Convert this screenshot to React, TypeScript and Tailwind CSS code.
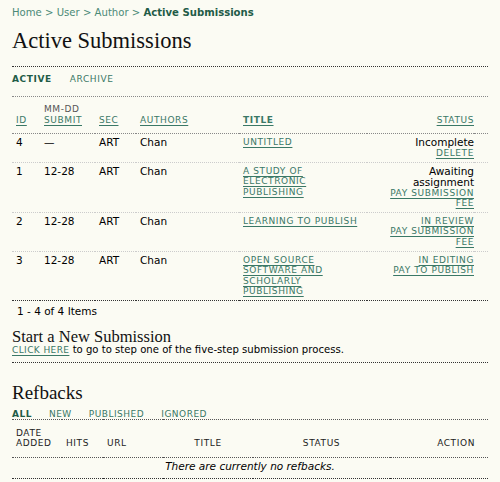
import React from "react";

const linkCls =
  "text-[#3a7866] underline underline-offset-2 uppercase text-[9px] tracking-[0.6px]";

type Line = { text: string; link?: boolean };
type Row = {
  id: string;
  date: string;
  sec: string;
  author: string;
  title: string[];
  status: Line[];
};

const rows: Row[] = [
  {
    id: "4",
    date: "—",
    sec: "ART",
    author: "Chan",
    title: ["UNTITLED"],
    status: [{ text: "Incomplete" }, { text: "DELETE", link: true }],
  },
  {
    id: "1",
    date: "12-28",
    sec: "ART",
    author: "Chan",
    title: ["A STUDY OF", "ELECTRONIC", "PUBLISHING"],
    status: [
      { text: "Awaiting" },
      { text: "assignment" },
      { text: "PAY SUBMISSION", link: true },
      { text: "FEE", link: true },
    ],
  },
  {
    id: "2",
    date: "12-28",
    sec: "ART",
    author: "Chan",
    title: ["LEARNING TO PUBLISH"],
    status: [
      { text: "IN REVIEW", link: true },
      { text: "PAY SUBMISSION", link: true },
      { text: "FEE", link: true },
    ],
  },
  {
    id: "3",
    date: "12-28",
    sec: "ART",
    author: "Chan",
    title: ["OPEN SOURCE", "SOFTWARE AND", "SCHOLARLY", "PUBLISHING"],
    status: [
      { text: "IN EDITING", link: true },
      { text: "PAY TO PUBLISH", link: true },
    ],
  },
];

const Dots = ({ className = "" }: { className?: string }) => (
  <div className={"border-t border-dotted " + className} />
);

const HeadLink = ({ children, bold }: { children: React.ReactNode; bold?: boolean }) => (
  <a className={"block leading-[11px] " + linkCls + (bold ? " font-bold" : "")}>{children}</a>
);

export default function App() {
  return (
    <div className="min-h-screen bg-[#fbfbf3] px-3 pt-[6px] font-['DejaVu_Sans',Verdana,sans-serif] text-[10.5px] text-black">
      {/* breadcrumb */}
      <div className="text-[10.1px] leading-[14px] text-[#4b8a77]">
        <a>Home</a> &gt; <a>User</a> &gt; <a>Author</a> &gt;{" "}
        <a className="font-bold text-[#1f5c47]">Active Submissions</a>
      </div>

      <h2 className="mt-[7px] font-['Liberation_Serif',Georgia,serif] text-[22.5px] leading-[28px] text-[#111]">
        Active Submissions
      </h2>

      <Dots className="mt-[11px] border-[#333]" />

      {/* tabs */}
      <div className="mt-[6px] flex gap-[18px] text-[9px] leading-[12px] uppercase tracking-[0.6px]">
        <span className="font-bold text-[#1f5c47]">Active</span>
        <span className="text-[#3a7866]">Archive</span>
      </div>

      <Dots className="mt-[11px] border-[#888]" />

      {/* submissions table */}
      <table className="w-[476px] border-collapse table-fixed">
        <colgroup>
          <col className="w-[28px]" />
          <col className="w-[55px]" />
          <col className="w-[41px]" />
          <col className="w-[103px]" />
          <col className="w-[128px]" />
          <col className="w-[107px]" />
          <col className="w-[14px]" />
        </colgroup>
        <thead>
          <tr className="border-b border-dotted border-[#888] align-bottom text-left">
            <th className="pl-1 pt-[7px] pb-[7px] font-normal">
              <HeadLink>ID</HeadLink>
            </th>
            <th className="pl-1 pt-[7px] pb-[7px] font-normal">
              <div className="text-[9px] leading-[11px] tracking-[0.6px] text-[#555]">MM-DD</div>
              <HeadLink>Submit</HeadLink>
            </th>
            <th className="pl-1 pt-[7px] pb-[7px] font-normal">
              <HeadLink>Sec</HeadLink>
            </th>
            <th className="pl-1 pt-[7px] pb-[7px] font-normal">
              <HeadLink>Authors</HeadLink>
            </th>
            <th className="pl-1 pt-[7px] pb-[7px] font-normal">
              <HeadLink bold>Title</HeadLink>
            </th>
            <th className="pt-[7px] pb-[7px] text-right font-normal">
              <HeadLink>Status</HeadLink>
            </th>
            <th />
          </tr>
        </thead>
        <tbody>
          {rows.map((r, i) => (
            <tr
              key={r.id}
              className={
                "align-top " +
                (i < rows.length - 1
                  ? "border-b border-dotted border-[#ccc]"
                  : "border-b border-dotted border-[#333]")
              }
            >
              <td className="pl-1 pt-[3px] pb-[3px] leading-[11px]">{r.id}</td>
              <td className="pl-1 pt-[3px] pb-[3px] leading-[11px]">{r.date}</td>
              <td className="pl-1 pt-[3px] pb-[3px] leading-[11px]">{r.sec}</td>
              <td className="pl-1 pt-[3px] pb-[3px] leading-[11px]">{r.author}</td>
              <td className="pl-1 pt-[3px] pb-[3px]">
                {r.title.map((t) => (
                  <a key={t} className={"block leading-[10.6px] " + linkCls}>
                    {t}
                  </a>
                ))}
              </td>
              <td className={"pt-[3px] text-right " + (i < rows.length - 1 ? "pb-[3px]" : "pb-[2px]")}>
                {r.status.map((s) =>
                  s.link ? (
                    <a key={s.text} className={"block leading-[10.6px] " + linkCls}>
                      {s.text}
                    </a>
                  ) : (
                    <div key={s.text} className="leading-[11px]">
                      {s.text}
                    </div>
                  )
                )}
              </td>
              <td />
            </tr>
          ))}
        </tbody>
      </table>

      <div className="pl-[5px] pt-[5px] leading-[11px]">1 - 4 of 4 Items</div>

      {/* new submission */}
      <h3 className="mt-[13px] font-['Liberation_Serif',Georgia,serif] text-[16.5px] leading-[14px] text-[#111]">
        Start a New Submission
      </h3>
      <p className="text-[10.1px] leading-[12px]">
        <a className="text-[9px] uppercase tracking-[0.4px] text-[#3a7866] underline underline-offset-2">
          Click Here
        </a>{" "}
        to go to step one of the five-step submission process.
      </p>

      <Dots className="mt-[6px] w-[476px] border-[#333]" />

      {/* refbacks */}
      <h3 className="mt-[19px] font-['Liberation_Serif',Georgia,serif] text-[19px] leading-[22px] text-[#111]">
        Refbacks
      </h3>
      <div className="mt-[5px] flex gap-[17px] text-[9px] leading-[10px] uppercase tracking-[0.5px]">
        <span className="font-bold text-[#1f5c47]">All</span>
        <span className="text-[#3a7866]">New</span>
        <span className="text-[#3a7866]">Published</span>
        <span className="text-[#3a7866]">Ignored</span>
      </div>

      <table className="w-[476px] border-collapse table-fixed">
        <colgroup>
          <col className="w-[50px]" />
          <col className="w-[41px]" />
          <col className="w-[60px]" />
          <col className="w-[90px]" />
          <col className="w-[137px]" />
          <col className="w-[98px]" />
        </colgroup>
        <thead>
          <tr className="border-y border-dotted border-[#555] align-bottom text-[9px] uppercase tracking-[0.6px] text-[#222]">
            <th className="pl-1 pt-[8px] pb-[9px] text-left font-normal leading-[10px]">
              Date
              <br />
              Added
            </th>
            <th className="pl-1 pt-[8px] pb-[9px] text-left font-normal leading-[10px]">Hits</th>
            <th className="pl-1 pt-[8px] pb-[9px] text-left font-normal leading-[10px]">URL</th>
            <th className="pt-[8px] pb-[9px] text-center font-normal leading-[10px]">Title</th>
            <th className="pt-[8px] pb-[9px] text-center font-normal leading-[10px]">Status</th>
            <th className="pr-[13px] pt-[8px] pb-[9px] text-right font-normal leading-[10px]">
              Action
            </th>
          </tr>
        </thead>
        <tbody>
          <tr className="border-b border-dotted border-[#333]">
            <td colSpan={6} className="pt-[2px] pb-[6px] text-center italic leading-[12px]">
              There are currently no refbacks.
            </td>
          </tr>
        </tbody>
      </table>
    </div>
  );
}
